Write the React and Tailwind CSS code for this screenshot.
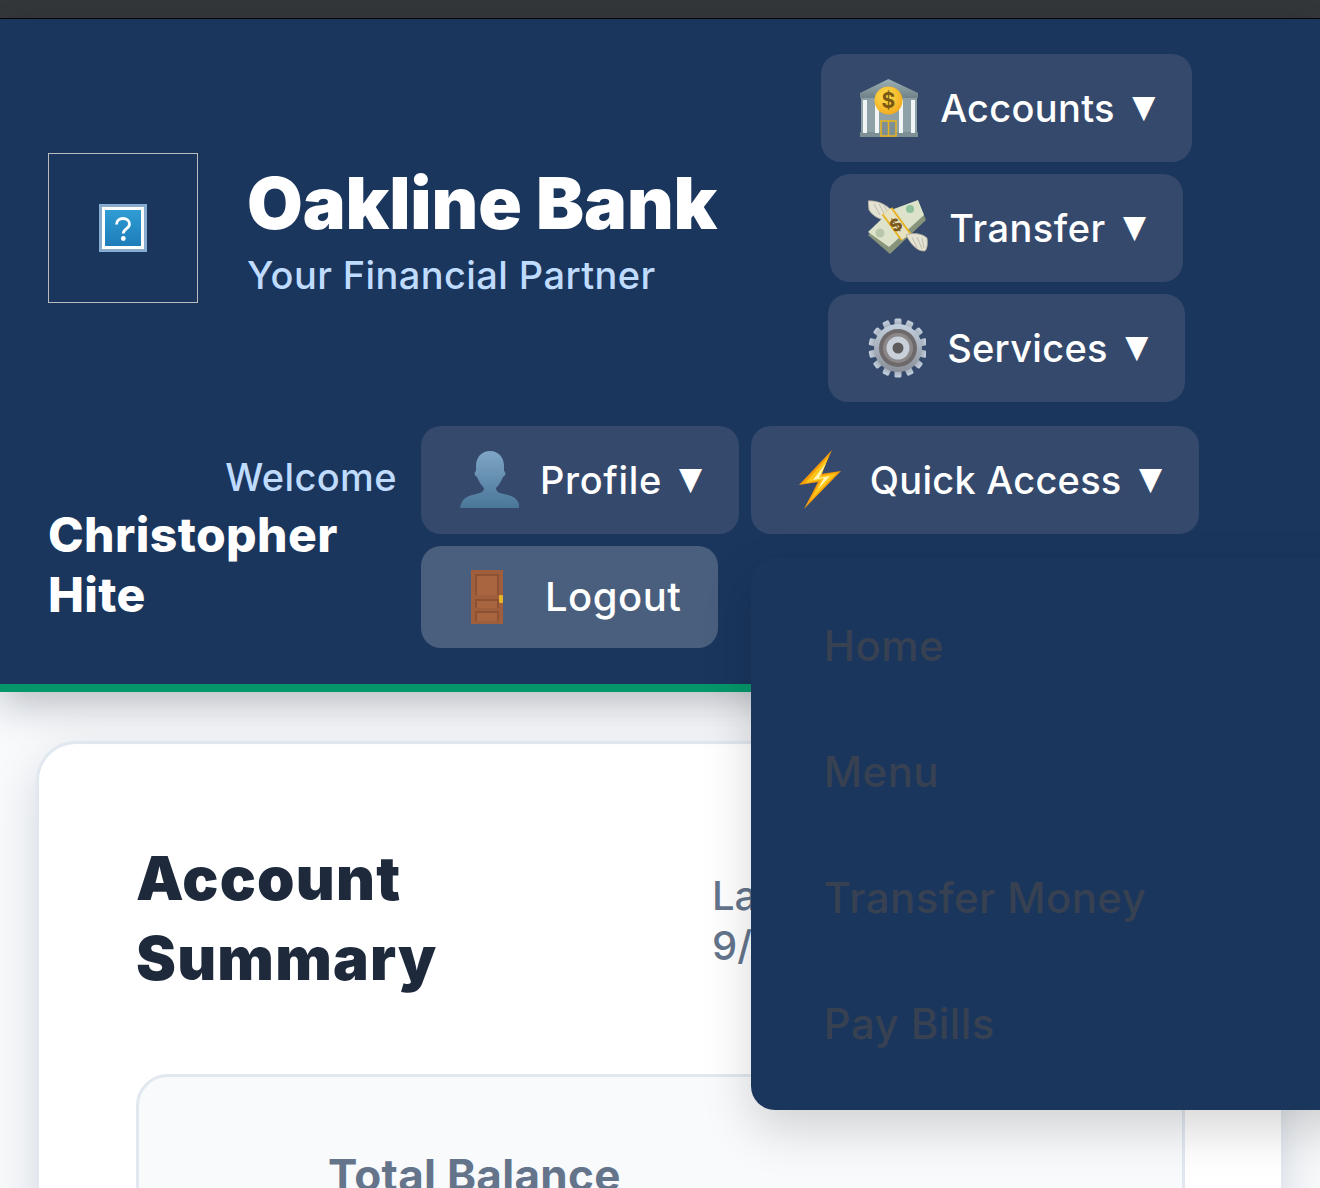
const BrokenImage = () => (
  <svg width="48" height="48" viewBox="0 0 48 48">
    <defs>
      <linearGradient id="bi" x1="0" y1="0" x2="0" y2="1">
        <stop offset="0" stopColor="#2f9dd3" />
        <stop offset="1" stopColor="#1f7cb9" />
      </linearGradient>
    </defs>
    <rect width="48" height="48" fill="#88abd0" />
    <rect x="3" y="3" width="42" height="42" fill="#fff" />
    <rect x="6" y="6" width="36" height="36" fill="url(#bi)" />
    <path d="M17.500 20.500c0-3.800 2.800-6 6.500-6s6.500 2.200 6.500 5.500c0 4.800-6.200 4.500-6.200 9.500" fill="none" stroke="#fff" strokeWidth="2.800" />
    <circle cx="24.300" cy="34.500" r="2.400" fill="#fff" />
  </svg>
);

const BankIcon = () => (
  <svg width="60" height="60" viewBox="0 0 60 60">
    <defs>
      <linearGradient id="bk" x1="0" y1="0" x2="0" y2="1">
        <stop offset="0" stopColor="#9db0b5" />
        <stop offset="1" stopColor="#6f8288" />
      </linearGradient>
      <radialGradient id="cn" cx="0.4" cy="0.35" r="0.7">
        <stop offset="0" stopColor="#ffdf4f" />
        <stop offset="1" stopColor="#f2a91c" />
      </radialGradient>
    </defs>
    <path d="M29.500 1L59 15v5H1v-5z" fill="url(#bk)" />
    <rect x="2" y="20" width="56" height="36" fill="#8ea1a6" />
    <rect x="1" y="54" width="58" height="5" fill="#7c8f94" />
    <rect x="4" y="22" width="4" height="33" fill="#f2f5f5" />
    <rect x="16" y="22" width="4" height="33" fill="#f2f5f5" />
    <rect x="40" y="22" width="4" height="33" fill="#f2f5f5" />
    <rect x="52" y="22" width="4" height="33" fill="#f2f5f5" />
    <rect x="22" y="43" width="15" height="15" fill="#7d9096" stroke="#e9b21e" strokeWidth="1.500" />
    <path d="M29.500 43v15" stroke="#e9b21e" strokeWidth="1.500" />
    <circle cx="29.500" cy="22.500" r="14" fill="url(#cn)" />
    <text x="29.500" y="30" textAnchor="middle" fontSize="21" fontWeight="700" fontFamily="Inter, sans-serif" fill="#7a5a12">$</text>
  </svg>
);

const MoneyIcon = () => (
  <svg width="60" height="60" viewBox="0 -2 60 60">
    <path d="M0 1c8-1 18 3 24 10l-9 9c-6-2-11-5-14-10z" fill="#e4e2d2" stroke="#a9a795" strokeWidth="0.800" />
    <path d="M6 4l6 11M11 4l6 11M16 6l5 8" stroke="#b4b2a0" strokeWidth="0.800" />
    <path d="M0 35L23 12 50 1l8 19-36 34z" fill="#87937a" />
    <path d="M0 32L23 10 50 0l6 15-35 32z" fill="#dde3cb" />
    <circle cx="12" cy="33" r="4.500" fill="#b9c7a8" />
    <circle cx="42" cy="9" r="4" fill="#8fc09c" />
    <path d="M19 11l19 26" stroke="#e6b325" strokeWidth="13" />
    <path d="M19 11l19 26" stroke="#e7e2c2" strokeWidth="9" />
    <text x="28" y="31" textAnchor="middle" fontSize="17" fontWeight="800" fontFamily="Inter, sans-serif" fill="#7c5b1a" transform="rotate(-35 28 25)">$</text>
    <path d="M38 35c8-3 17-1 21 3 1 6 0 11-2 13-8 1-15-8-19-16z" fill="#e4e2d2" stroke="#a9a795" strokeWidth="0.800" />
    <path d="M44 37l5 11M49 37l5 12M54 38l2 10" stroke="#b4b2a0" strokeWidth="0.800" />
  </svg>
);

const GearIcon = () => {
  const teeth = [0, 1, 2, 3, 4, 5, 6, 7, 8, 9, 10, 11, 12, 13];
  return (
    <svg width="60" height="60" viewBox="-2 0 60 60">
      <defs>
        <linearGradient id="gr" x1="0" y1="0" x2="0" y2="1">
          <stop offset="0" stopColor="#c3d0de" />
          <stop offset="1" stopColor="#8a8f98" />
        </linearGradient>
      </defs>
      {teeth.map((t) => (
        <rect key={t} x="26.500" y="0.500" width="7" height="12" rx="1.500" fill="url(#gr)" transform={`rotate(${(t * 360) / 14} 30 30)`} />
      ))}
      <circle cx="30" cy="30" r="24" fill="url(#gr)" />
      <circle cx="30" cy="30" r="19" fill="#6e6a6b" />
      <circle cx="30" cy="30" r="15" fill="#8c8889" />
      <circle cx="30" cy="30" r="11.500" fill="#c9d0da" />
      <circle cx="30" cy="30" r="5.500" fill="#5d5a5c" />
    </svg>
  );
};

const BustIcon = () => (
  <svg width="60" height="60" viewBox="-1 0 60 60">
    <defs>
      <linearGradient id="bs" x1="0" y1="0" x2="0" y2="1">
        <stop offset="0" stopColor="#7fa6c6" />
        <stop offset="1" stopColor="#4a7698" />
      </linearGradient>
    </defs>
    <path d="M30 1c9 0 14 7 14 15v5c2 1 2 5-1 6-2 5-5 9-7 11 0 3 2 5 8 6 8 2 14 3 16 14H0c2-11 8-12 16-14 6-1 8-3 8-6-2-2-5-6-7-11-3-1-3-5-1-6v-5c0-8 5-15 14-15z" fill="url(#bs)" />
  </svg>
);

const BoltIcon = () => (
  <svg width="60" height="60" viewBox="0 0 60 60">
    <path d="M43 0L10 35l19-3-14 27 37-38-20 3z" fill="#f59c0a" />
    <path d="M40 6L16 33l16-3-11 21 27-28-16 3z" fill="#ffc61a" />
    <path d="M37 13L24 30l11-2-6 11 12-13-11 2z" fill="#fff6b8" />
  </svg>
);

const DoorIcon = () => (
  <svg width="60" height="60" viewBox="0 0 60 60">
    <rect x="12" y="3" width="32" height="54" fill="#a05f3c" />
    <rect x="16" y="7" width="24" height="21" fill="#8e5233" />
    <rect x="18" y="9" width="20" height="19" fill="#a8653f" />
    <rect x="16" y="32" width="24" height="9" fill="#8e5233" />
    <rect x="18" y="34" width="20" height="7" fill="#a8653f" />
    <rect x="16" y="44" width="24" height="10" fill="#8e5233" />
    <rect x="18" y="46" width="20" height="8" fill="#a8653f" />
    <rect x="40" y="28" width="4" height="8" rx="1" fill="#e5b52c" />
  </svg>
);

const Arrow = () => (
  <span className="ml-[18px] w-[22px] flex-none flex justify-center text-[25px] leading-none relative top-[1px] scale-y-125">▼</span>
);

const NavButton = ({ icon: Icon, label, gap = 'gap-[21px]', arrow = true, className = '' }) => (
  <div className={`flex items-center rounded-[20px] pl-[38px] pr-[37px] font-medium text-white ${className}`}>
    <span className={`flex items-center ${gap}`}>
      <Icon />
      {label}
    </span>
    {arrow && <Arrow />}
  </div>
);

const menuItems = ['Home', 'Menu', 'Transfer Money', 'Pay Bills'];

export default function App() {
  return (
    <div className="h-[1188px] overflow-hidden bg-[#f8fafc] font-['Inter',sans-serif]">
      <div className="h-[19px] bg-[#35383a] border-b border-black" />

      {/* Header */}
      <header className="relative z-10 bg-[#1a365d] border-b-[8px] border-[#059669] px-12 pt-[35px] pb-9 shadow-[0_10px_40px_rgba(15,23,42,0.3)]">
        <div className="flex items-center">
          <div className="flex items-center gap-[49px]">
            <div className="w-[150px] h-[150px] border border-[#bdbdbd] flex items-center justify-center">
              <BrokenImage />
            </div>
            <div className="pt-[3px]">
              <h1 className="text-[72px] leading-[86px] font-black text-white tracking-[-0.1px]">Oakline Bank</h1>
              <p className="mt-1 text-[38px] leading-[50px] font-medium text-[#bfdbfe] tracking-[0.4px]">Your Financial Partner</p>
            </div>
          </div>
          <nav className="ml-auto w-[531px] flex flex-col items-center gap-3">
            <NavButton icon={BankIcon} label="Accounts" className="h-[108px] text-[38px] tracking-[0.3px] bg-[#34496c]" />
            <NavButton icon={MoneyIcon} label="Transfer" className="h-[108px] text-[38px] tracking-[0.5px] bg-[#34496c]" />
            <NavButton icon={GearIcon} label="Services" className="h-[108px] text-[38px] tracking-[0.3px] bg-[#34496c]" />
          </nav>
        </div>

        <div className="flex items-center gap-6 mt-6">
          <div className="w-[349px] pt-[3px]">
            <p className="mb-[3px] text-right text-[38px] leading-[50px] font-medium text-[#bfdbfe] tracking-[0.4px]">Welcome</p>
            <p className="text-[48px] leading-[60px] font-extrabold text-white tracking-[0.4px]">Christopher Hite</p>
          </div>
          <div className="flex flex-wrap gap-3 w-[800px]">
            <NavButton icon={BustIcon} label="Profile" className="h-[108px] text-[38px] tracking-[0.65px] bg-[#34496c]" />
            <div className="relative">
              <NavButton icon={BoltIcon} label="Quick Access" className="h-[108px] text-[38px] tracking-[0.25px] bg-[#34496c]" />
              {/* Open dropdown */}
              <div className="absolute left-0 top-[132px] w-[640px] py-6 rounded-3xl bg-[#1a365d] shadow-[0_20px_50px_rgba(0,0,0,0.16)]">
                {menuItems.map((item) => (
                  <div key={item} className="h-[126px] flex items-center pl-[73px] text-[42px] font-medium text-[#374151] tracking-[0.4px]">
                    {item}
                  </div>
                ))}
              </div>
            </div>
            <NavButton icon={DoorIcon} label="Logout" gap="gap-[26px]" arrow={false} className="h-[102px] text-[40px] tracking-[0.5px] bg-[#4a5f7d]" />
          </div>
        </div>
      </header>

      {/* Account summary */}
      <main className="pl-[36px] pr-[36px] pt-[49px]">
        <section className="bg-white border-[3px] border-[#e2e8f0] rounded-[40px] pl-[97px] pr-[96px] pt-[94px] shadow-[0_16px_48px_rgba(15,23,42,0.14)]">
          <div className="flex justify-between">
            <h2 className="w-[400px] text-[60px] leading-[80px] font-black text-[#1e293b] tracking-[1.2px]">Account Summary</h2>
            <p className="w-[473px] mt-[33px] text-[40px] leading-[50px] font-medium text-[#64748b]">
              <span className="block">Last updated</span>
              <span className="block">9/15/2025</span>
            </p>
          </div>
          <div className="mt-[76px] h-[300px] bg-[#f8fafc] border-[3px] border-[#e2e8f0] rounded-[32px] pt-[73px] pl-[189px]">
            <p className="text-[44px] leading-[50px] font-bold text-[#64748b] tracking-[0.3px]">Total Balance</p>
          </div>
        </section>
      </main>
    </div>
  );
}
